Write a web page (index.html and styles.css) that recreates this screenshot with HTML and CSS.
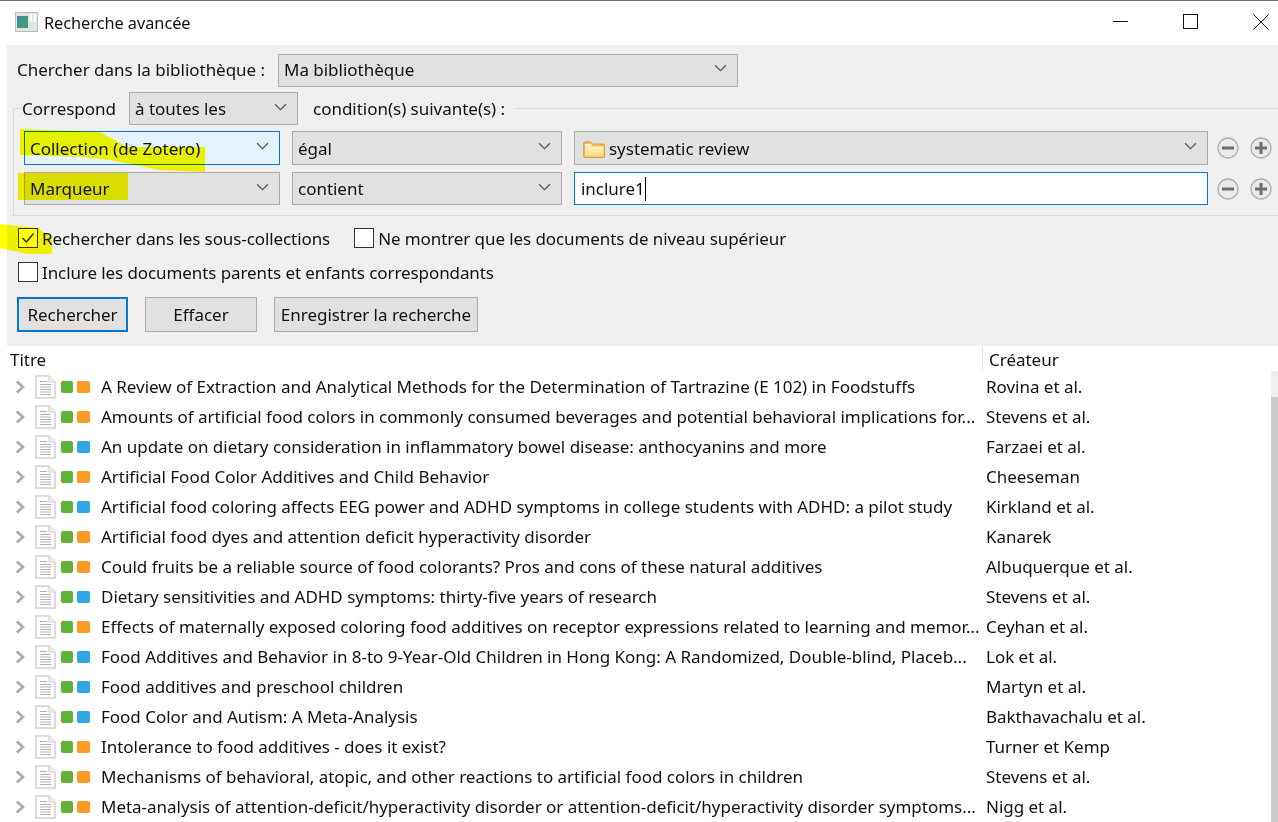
FILE: index.html
```html
<!DOCTYPE html>
<html lang="fr">
<head>
<meta charset="utf-8">
<title>Recherche avancée</title>
<link rel="stylesheet" href="styles.css">
</head>
<body>
<svg width="0" height="0" class="defs">
  <defs>
    <symbol id="chev" viewBox="0 0 10 14"><path d="M1.800 1.500 8 7l-6.200 5.500" fill="none" stroke="#adadad" stroke-width="2.800"/></symbol>
    <symbol id="doc" viewBox="0 0 21 24"><path d="M1 1h13l6 6v16H1z" fill="#fff" stroke="#d2d2d2" stroke-width="1.600"/><path d="M14 1v6h6" fill="#f2f2f2" stroke="#d2d2d2" stroke-width="1.200"/><path d="M5 6.500h7M5 9.500h11M5 12h11M5 14.500h11M5 17h11M5 19.500h11" stroke="#b2b2b2"/></symbol>
    <symbol id="caret" viewBox="0 0 12 7"><path d="M1 1l5 5 5-5" fill="none" stroke="#555" stroke-width="1.100"/></symbol>
    <symbol id="minus" viewBox="0 0 22 22"><circle cx="11" cy="11" r="10" fill="#eaeaea" stroke="#b0b0b0" stroke-width="1.300"/><path d="M5 11h12" stroke="#707070" stroke-width="3"/></symbol>
    <symbol id="plus" viewBox="0 0 22 22"><circle cx="11" cy="11" r="10" fill="#eaeaea" stroke="#b0b0b0" stroke-width="1.300"/><path d="M5 11h12M11 5v12" stroke="#707070" stroke-width="3"/></symbol>
  </defs>
</svg>

<header class="titlebar">
  <svg class="app-icon" width="23" height="20" viewBox="0 0 23 20"><defs><linearGradient id="appg" x1="0" y1="0" x2="1" y2="1"><stop offset="0" stop-color="#4a7fa8"/><stop offset=".55" stop-color="#3f9a80"/><stop offset="1" stop-color="#4f9f6e"/></linearGradient></defs><rect x=".5" y=".5" width="22" height="19" fill="#dfe6e6" stroke="#b5bcbc"/><rect x="2" y="4" width="11" height="12" fill="url(#appg)"/><rect x="15" y="2" width="2" height="8" fill="#fff"/><rect x="19" y="2" width="2" height="8" fill="#fff"/></svg>
  <span class="window-title">Recherche avancée</span>
  <div class="window-controls">
    <svg width="16" height="16" viewBox="0 0 16 16"><path d="M0 7.500h15" stroke="#111"/></svg>
    <svg width="16" height="16" viewBox="0 0 16 16"><rect x=".5" y=".5" width="14" height="14" fill="none" stroke="#111"/></svg>
    <svg width="16" height="16" viewBox="0 0 16 16"><path d="M.5.500l15 15M15.500.500l-15 15" stroke="#111"/></svg>
  </div>
</header>

<section class="panel">
  <div class="lib-row">
    <span class="lib-label">Chercher dans la bibliothèque :</span>
    <div class="combo combo-lib"><span>Ma bibliothèque</span><svg class="caret"><use href="#caret"/></svg></div>
  </div>

  <fieldset class="conditions">
    <legend class="legend">
      <span class="legend-a">Correspond</span>
      <div class="combo combo-match"><span>à toutes les</span><svg class="caret"><use href="#caret"/></svg></div>
      <span class="legend-b">condition(s) suivante(s) :</span>
    </legend>
    <div class="cond-row first">
      <div class="combo combo-field focused"><span>Collection (de Zotero)</span><svg class="caret"><use href="#caret"/></svg></div>
      <div class="combo combo-op"><span>égal</span><svg class="caret"><use href="#caret"/></svg></div>
      <div class="combo combo-val">
        <svg class="folder" width="22" height="17" viewBox="0 0 22 17"><defs><linearGradient id="fold" x1="0" y1="0" x2="0" y2="1"><stop offset="0" stop-color="#fff6c4"/><stop offset="1" stop-color="#f8d873"/></linearGradient></defs><path d="M.7 15.500V2C.7 1.200 1.300.7 2 .7h5.500L9.500 3h11c.6 0 1 .4 1 1v11.500c0 .5-.4 1-1 1H1.700c-.6 0-1-.5-1-1z" fill="#f3b765" stroke="#e09c4a"/><path d="M2 5.500h18.500V15.500H2z" fill="url(#fold)"/><path d="M2 3h6.500v2.500H2z" fill="#fff3c6"/></svg>
        <span>systematic review</span><svg class="caret"><use href="#caret"/></svg>
      </div>
      <svg class="round"><use href="#minus"/></svg>
      <svg class="round"><use href="#plus"/></svg>
    </div>
    <div class="cond-row second">
      <div class="combo combo-field"><span>Marqueur</span><svg class="caret"><use href="#caret"/></svg></div>
      <div class="combo combo-op"><span>contient</span><svg class="caret"><use href="#caret"/></svg></div>
      <div class="textbox"><span>inclure1</span><i class="text-caret"></i></div>
      <svg class="round"><use href="#minus"/></svg>
      <svg class="round"><use href="#plus"/></svg>
    </div>
  </fieldset>

  <div class="check-row first">
    <label class="check"><span class="box"><svg width="14" height="12" viewBox="0 0 14 12"><path d="M1.500 6l4 4 7-8.500" fill="none" stroke="#222" stroke-width="1.300"/></svg></span>Rechercher dans les sous-collections</label>
    <label class="check"><span class="box"></span>Ne montrer que les documents de niveau supérieur</label>
  </div>
  <div class="check-row">
    <label class="check"><span class="box"></span>Inclure les documents parents et enfants correspondants</label>
  </div>

  <div class="buttons">
    <div class="btn btn-search default">Rechercher</div>
    <div class="btn btn-clear">Effacer</div>
    <div class="btn btn-save">Enregistrer la recherche</div>
  </div>
</section>

<section class="results">
  <div class="list-head">
    <div class="col-title">Titre</div>
    <div class="col-creator">Créateur</div>
  </div>
  <div class="list-body">
    <ul class="rows">
      <li class="row"><svg class="chev"><use href="#chev"/></svg><svg class="doc"><use href="#doc"/></svg><i class="tag green"></i><i class="tag orange"></i><span class="t">A Review of Extraction and Analytical Methods for the Determination of Tartrazine (E 102) in Foodstuffs</span><span class="c">Rovina et al.</span></li>
      <li class="row"><svg class="chev"><use href="#chev"/></svg><svg class="doc"><use href="#doc"/></svg><i class="tag green"></i><i class="tag orange"></i><span class="t">Amounts of artificial food colors in commonly consumed beverages and potential behavioral implications for...</span><span class="c">Stevens et al.</span></li>
      <li class="row"><svg class="chev"><use href="#chev"/></svg><svg class="doc"><use href="#doc"/></svg><i class="tag green"></i><i class="tag blue"></i><span class="t">An update on dietary consideration in inflammatory bowel disease: anthocyanins and more</span><span class="c">Farzaei et al.</span></li>
      <li class="row"><svg class="chev"><use href="#chev"/></svg><svg class="doc"><use href="#doc"/></svg><i class="tag green"></i><i class="tag orange"></i><span class="t">Artificial Food Color Additives and Child Behavior</span><span class="c">Cheeseman</span></li>
      <li class="row"><svg class="chev"><use href="#chev"/></svg><svg class="doc"><use href="#doc"/></svg><i class="tag green"></i><i class="tag blue"></i><span class="t">Artificial food coloring affects EEG power and ADHD symptoms in college students with ADHD: a pilot study</span><span class="c">Kirkland et al.</span></li>
      <li class="row"><svg class="chev"><use href="#chev"/></svg><svg class="doc"><use href="#doc"/></svg><i class="tag green"></i><i class="tag orange"></i><span class="t">Artificial food dyes and attention deficit hyperactivity disorder</span><span class="c">Kanarek</span></li>
      <li class="row"><svg class="chev"><use href="#chev"/></svg><svg class="doc"><use href="#doc"/></svg><i class="tag green"></i><i class="tag orange"></i><span class="t">Could fruits be a reliable source of food colorants? Pros and cons of these natural additives</span><span class="c">Albuquerque et al.</span></li>
      <li class="row"><svg class="chev"><use href="#chev"/></svg><svg class="doc"><use href="#doc"/></svg><i class="tag green"></i><i class="tag blue"></i><span class="t">Dietary sensitivities and ADHD symptoms: thirty-five years of research</span><span class="c">Stevens et al.</span></li>
      <li class="row"><svg class="chev"><use href="#chev"/></svg><svg class="doc"><use href="#doc"/></svg><i class="tag green"></i><i class="tag orange"></i><span class="t">Effects of maternally exposed coloring food additives on receptor expressions related to learning and memor...</span><span class="c">Ceyhan et al.</span></li>
      <li class="row"><svg class="chev"><use href="#chev"/></svg><svg class="doc"><use href="#doc"/></svg><i class="tag green"></i><i class="tag blue"></i><span class="t">Food Additives and Behavior in 8-to 9-Year-Old Children in Hong Kong: A Randomized, Double-blind, Placeb...</span><span class="c">Lok et al.</span></li>
      <li class="row"><svg class="chev"><use href="#chev"/></svg><svg class="doc"><use href="#doc"/></svg><i class="tag green"></i><i class="tag blue"></i><span class="t">Food additives and preschool children</span><span class="c">Martyn et al.</span></li>
      <li class="row"><svg class="chev"><use href="#chev"/></svg><svg class="doc"><use href="#doc"/></svg><i class="tag green"></i><i class="tag blue"></i><span class="t">Food Color and Autism: A Meta-Analysis</span><span class="c">Bakthavachalu et al.</span></li>
      <li class="row"><svg class="chev"><use href="#chev"/></svg><svg class="doc"><use href="#doc"/></svg><i class="tag green"></i><i class="tag orange"></i><span class="t">Intolerance to food additives - does it exist?</span><span class="c">Turner et Kemp</span></li>
      <li class="row"><svg class="chev"><use href="#chev"/></svg><svg class="doc"><use href="#doc"/></svg><i class="tag green"></i><i class="tag orange"></i><span class="t">Mechanisms of behavioral, atopic, and other reactions to artificial food colors in children</span><span class="c">Stevens et al.</span></li>
      <li class="row"><svg class="chev"><use href="#chev"/></svg><svg class="doc"><use href="#doc"/></svg><i class="tag green"></i><i class="tag orange"></i><span class="t">Meta-analysis of attention-deficit/hyperactivity disorder or attention-deficit/hyperactivity disorder symptoms...</span><span class="c">Nigg et al.</span></li>
    </ul>
    <div class="scrollbar"><div class="thumb"></div></div>
  </div>
</section>

<svg class="highlights" width="210" height="260" viewBox="0 0 210 260">
  <path d="M20 129 L100 132 L127 147 L205 147 V172 L160 170 L110 160 L83 157 L20 155z" fill="#ffff00"/>
  <path d="M18 173H128V200H18z" fill="#f8fa00"/>
  <path d="M0 224L18 226L37 228L52 237V254H28L0 248z" fill="#ffff00"/>
</svg>
</body>
</html>
```

FILE: styles.css
```css
* { box-sizing: border-box; }
html, body { margin: 0; padding: 0; }
body {
  width: 1278px;
  height: 822px;
  overflow: hidden;
  position: relative;
  background: #fff;
  color: #111;
  font-family: "Noto Sans", "Open Sans", sans-serif;
  font-size: 17px;
  letter-spacing: -0.02px;
  line-height: 22px;
}
.defs { position: absolute; }
svg { display: block; flex: none; }

.titlebar {
  height: 45px;
  border-top: 1px solid #6f6f6f;
  display: flex;
  align-items: center;
  padding-left: 15px;
  padding-bottom: 3px;
}
.window-title { margin: 3px 0 0 6px; font-size: 16.3px; }
.window-controls {
  margin-left: auto;
  display: flex;
  gap: 54px;
  padding-right: 9px;
}

.panel {
  margin-left: 7px;
  height: 301px;
  background: #efefef;
  padding-top: 9px;
}
.lib-row {
  display: flex;
  align-items: center;
  padding-left: 10px;
  height: 32px;
}
.lib-label { width: 261px; }

.combo {
  display: flex;
  align-items: center;
  background: #e1e1e1;
  border: 1px solid #adadad;
  padding: 0 10px 0 5px;
  height: 33px;
}
.combo .caret { width: 13px; height: 8px; margin-left: auto; margin-bottom: 4px; }
.combo-lib { width: 460px; }
.combo-match { width: 169px; }
.combo-field { width: 256px; }
.combo-op { width: 270px; }
.combo-val { width: 634px; padding-left: 8px; }
.folder { margin-right: 4px; }
.focused { background: #e5f1fb; border-color: #0078d7; }

.conditions {
  margin: 6px 0 0 6px;
  padding: 6px 0 0 10px;
  border: 0;
  border-top: 1px solid #dadada;
  border-left: 1px solid #dadada;
  border-bottom: 1px solid #dadada;
  height: 124px;
}
.legend {
  padding: 0;
  margin-left: -3px;
  display: flex;
  align-items: center;
}
.legend-a { width: 108px; padding-left: 1px; }
.legend-b { margin-left: 15px; padding-right: 10px; }

.cond-row {
  display: flex;
  align-items: center;
  gap: 12px;
  height: 34px;
}
.cond-row.first .combo { padding-top: 2px; }
.cond-row.first .caret { margin-top: -2px; }
.cond-row.second { margin-top: 7px; height: 33px; }
.cond-row .combo, .cond-row .textbox { height: 100%; }
.round { width: 22px; height: 22px; margin-right: -1px; }
.combo-val + .round, .textbox + .round { margin-left: -3px; }
.round + .round { margin-left: 0; }
.textbox {
  width: 634px;
  background: #fff;
  border: 1px solid #0078d7;
  display: flex;
  align-items: center;
  padding-left: 6px;
}
.text-caret { width: 1px; height: 24px; background: #000; }

.check-row {
  display: flex;
  padding-left: 11px;
  margin-top: 12px;
  gap: 24px;
  height: 22px;
}
.check-row.first { margin-top: 11px; }
.check { display: flex; align-items: center; padding-top: 2px; letter-spacing: -0.09px; }
.box {
  width: 20px;
  height: 20px;
  margin-top: -2px;
  border: 1px solid #333;
  background: #fff;
  margin-right: 4px;
  display: flex;
  align-items: center;
  justify-content: center;
}
.buttons {
  display: flex;
  gap: 17px;
  padding-left: 10px;
  margin-top: 14px;
}
.btn {
  height: 35px;
  background: #e1e1e1;
  border: 1px solid #adadad;
  display: flex;
  align-items: center;
  justify-content: center;
}
.btn-search { width: 111px; }
.btn-clear { width: 112px; }
.btn-save { width: 204px; }
.default { border: 2px solid #0078d7; }

.list-head {
  height: 26px;
  display: flex;
  align-items: center;
  background: #fff;
}
.col-title { width: 983px; padding-left: 10px; height: 100%; border-right: 1px solid #e5e5e5; line-height: 28px; }
.col-creator { padding-left: 6px; line-height: 28px; height: 100%; }

.list-body { position: relative; height: 450px; }
.rows { list-style: none; margin: 0; padding: 0; }
.row {
  height: 30px;
  display: flex;
  align-items: center;
  padding-left: 15px;
}
.chev { width: 10px; height: 14px; }
.doc { width: 21px; height: 24px; margin-left: 10px; }
.tag { height: 12px; border-radius: 2px; flex: none; }
.green { width: 12px; background: #5fb236; margin-left: 5px; }
.orange { width: 13px; background: #ff9a27; margin-left: 4px; }
.blue { width: 13px; background: #2ea8e5; margin-left: 4px; }
.t { width: 885px; margin-left: 11px; white-space: nowrap; overflow: hidden; flex: none; }
.c { white-space: nowrap; }

.scrollbar {
  position: absolute;
  right: 0;
  top: -1px;
  width: 7px;
  bottom: 0;
  background: #efefef;
}
.thumb { margin-top: 26px; height: 425px; background: #cdcdcd; }

.highlights {
  position: absolute;
  left: 0;
  top: 0;
  mix-blend-mode: multiply;
  pointer-events: none;
}
```
